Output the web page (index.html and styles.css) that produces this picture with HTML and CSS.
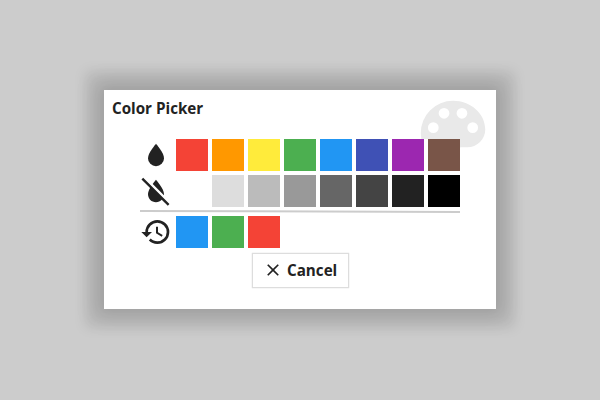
FILE: index.html
```html
<!DOCTYPE html>
<html lang="en">
<head>
<meta charset="utf-8">
<title>Color Picker</title>
<link rel="stylesheet" href="styles.css">
</head>
<body>
<main class="dialog">
  <svg class="palette" viewBox="0 0 24 24" aria-hidden="true"><path d="M17.5,12A1.5,1.5 0 0,1 16,10.5A1.5,1.5 0 0,1 17.5,9A1.5,1.5 0 0,1 19,10.5A1.5,1.5 0 0,1 17.5,12M14.5,8A1.5,1.5 0 0,1 13,6.5A1.5,1.5 0 0,1 14.5,5A1.5,1.5 0 0,1 16,6.5A1.5,1.5 0 0,1 14.5,8M9.5,8A1.5,1.5 0 0,1 8,6.5A1.5,1.5 0 0,1 9.5,5A1.5,1.5 0 0,1 11,6.5A1.5,1.5 0 0,1 9.5,8M6.5,12A1.5,1.5 0 0,1 5,10.5A1.5,1.5 0 0,1 6.5,9A1.5,1.5 0 0,1 8,10.5A1.5,1.5 0 0,1 6.5,12M12,3A9,9 0 0,0 3,12A9,9 0 0,0 12,21A1.5,1.5 0 0,0 13.5,19.5C13.5,19.11 13.35,18.76 13.11,18.5C12.88,18.23 12.73,17.88 12.73,17.5A1.5,1.5 0 0,1 14.23,16H16A5,5 0 0,0 21,11C21,6.58 16.97,3 12,3Z"/></svg>
  <h1 class="title">Color Picker</h1>
  <section class="picker">
    <div class="row">
      <svg class="icon" viewBox="0 0 24 24"><path d="M12,20A6,6 0 0,1 6,14C6,10 12,3.25 12,3.25C12,3.25 18,10 18,14A6,6 0 0,1 12,20Z"/></svg>
      <i class="swatch red"></i><i class="swatch orange"></i><i class="swatch yellow"></i><i class="swatch green"></i><i class="swatch blue"></i><i class="swatch indigo"></i><i class="swatch purple"></i><i class="swatch brown"></i>
    </div>
    <div class="row">
      <svg class="icon" viewBox="0 0 24 24"><path d="M20.84 22.73L16.29 18.18C15.2 19.3 13.69 20 12 20C8.69 20 6 17.31 6 14C6 12.67 6.67 11.03 7.55 9.44L1.11 3L2.39 1.73L22.11 21.46L20.84 22.73M18 14C18 10 12 3.25 12 3.25S10.84 4.55 9.55 6.35L17.95 14.75C18 14.5 18 14.25 18 14Z"/></svg>
      <i class="swatch white"></i><i class="swatch gray-1"></i><i class="swatch gray-2"></i><i class="swatch gray-3"></i><i class="swatch gray-4"></i><i class="swatch gray-5"></i><i class="swatch gray-6"></i><i class="swatch black"></i>
    </div>
    <svg class="divider" viewBox="0 0 320 5"><path d="M0 2 320 3"/></svg>
    <div class="row">
      <svg class="icon history" viewBox="0 0 24 24"><path d="M13.5,8H12V13L16.28,15.54L17,14.33L13.5,12.25V8M13,3A9,9 0 0,0 4,12H1L4.96,16.03L9,12H6A7,7 0 0,1 13,5A7,7 0 0,1 20,12A7,7 0 0,1 13,19C11.07,19 9.32,18.21 8.06,16.94L6.64,18.36C8.27,20 10.5,21 13,21A9,9 0 0,0 22,12A9,9 0 0,0 13,3"/></svg>
      <i class="swatch blue"></i><i class="swatch green"></i><i class="swatch red"></i>
    </div>
  </section>
  <button class="cancel"><svg class="close" viewBox="0 0 24 24"><path d="M19,6.41L17.59,5L12,10.59L6.41,5L5,6.41L10.59,12L5,17.59L6.41,19L12,13.41L17.59,19L19,17.59L13.41,12L19,6.41Z"/></svg>Cancel</button>
</main>
</body>
</html>
```
FILE: styles.css
```css
* { box-sizing: border-box; }
body {
  margin: 0;
  height: 400px;
  padding-top: 90px;
  background: #ccc;
  color: #222;
  font-family: "Open Sans", sans-serif;
}
svg { display: block; fill: #222; }
.dialog {
  position: relative;
  width: 392px;
  height: 219px;
  margin: 0 auto;
  padding: 8px;
  display: flex;
  flex-direction: column;
  align-items: center;
  background: #fff;
  box-shadow: 0 0 12px 19px rgba(0, 0, 0, 0.08), 0 0 18px 9px rgba(0, 0, 0, 0.15);
}
.palette {
  position: absolute;
  top: 0;
  right: 0;
  width: 86px;
  height: 86px;
  fill: #e9e9e9;
}
.title {
  align-self: stretch;
  margin: 0;
  height: 41px;
  font-size: 15.2px;
  line-height: 20px;
  font-weight: 700;
}
.picker {
  position: relative;
  width: 320px;
  background: #fff;
}
.row { display: flex; gap: 4px; height: 36px; }
.icon { width: 32px; height: 33px; }
.history { height: 32px; }
.swatch { width: 32px; height: 32px; }
.red { background: #f44336; }
.orange { background: #ff9800; }
.yellow { background: #ffeb3b; }
.green { background: #4caf50; }
.blue { background: #2196f3; }
.indigo { background: #3f51b5; }
.purple { background: #9c27b0; }
.brown { background: #795548; }
.white { background: #fff; }
.gray-1 { background: #ddd; }
.gray-2 { background: #bbb; }
.gray-3 { background: #999; }
.gray-4 { background: #666; }
.gray-5 { background: #444; }
.gray-6 { background: #222; }
.black { background: #000; }
.divider { width: 320px; height: 5px; margin: -2px 0 2px; }
.divider path { stroke: #ccc; stroke-width: 2; fill: none; }
.cancel {
  display: flex;
  align-items: center;
  gap: 4px;
  width: 97px;
  height: 35px;
  margin: 1px 0 0 1px;
  padding: 0 10px 1px;
  border: 1px solid #ddd;
  box-shadow: 0 0 1px #ccc;
  background: #fff;
  color: #222;
  font: 700 15.2px/20px "Open Sans", sans-serif;
}
.close { width: 20px; height: 20px; }
```
